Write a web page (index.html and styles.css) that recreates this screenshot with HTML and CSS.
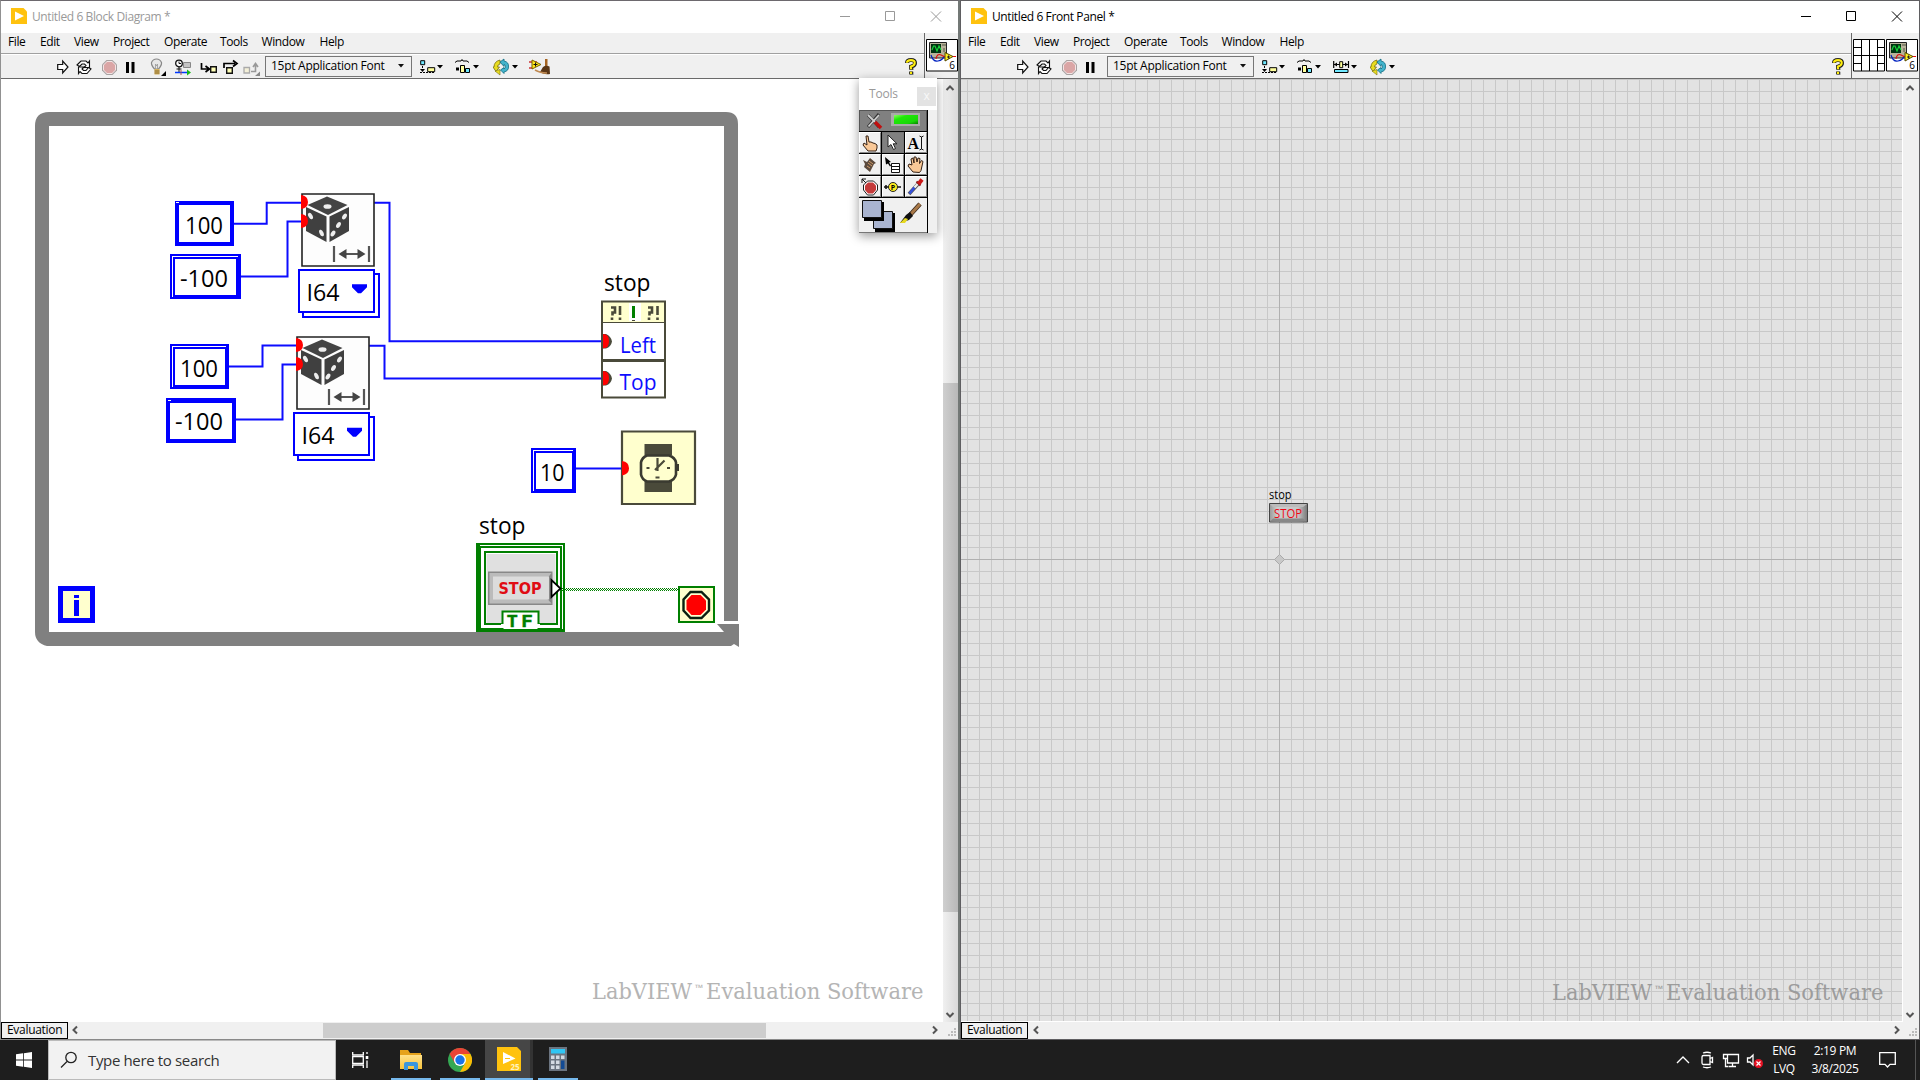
FILE: index.html
```html
<!DOCTYPE html>
<html lang="en">
<head>
<meta charset="utf-8">
<title>LabVIEW - Untitled 6</title>
<link rel="stylesheet" href="styles.css">
</head>
<body>
<svg class="defs" width="0" height="0">
  <defs>
    <linearGradient id="steel" x1="0" x2="1"><stop offset="0" stop-color="#999"/><stop offset=".2" stop-color="#ccc"/><stop offset=".75" stop-color="#c6c6c6"/><stop offset="1" stop-color="#777"/></linearGradient>
    <linearGradient id="led" x1="0" y1="0" x2="1" y2="1"><stop offset="0" stop-color="#8cff60"/><stop offset=".3" stop-color="#20e808"/><stop offset=".75" stop-color="#18d808"/><stop offset="1" stop-color="#088000"/></linearGradient>
    <linearGradient id="folder" x1="0" y1="0" x2="0" y2="1"><stop offset="0" stop-color="#ffe18a"/><stop offset="1" stop-color="#f8c43c"/></linearGradient>
    <pattern id="dots" width="2" height="2" patternUnits="userSpaceOnUse"><path d="M0 0h1v1H0zM1 1h1v1H1z" fill="#007f00"/></pattern>
    <symbol id="logo" viewBox="0 0 16 16"><path d="M0 0h12.500l3.500 3.500V16H0z" fill="#ffc20e"/><path d="M4 3.500l9 4.500-9 4.500z" fill="#fff"/></symbol>
    <symbol id="run" viewBox="0 0 20 20"><path d="M.7 7.500h5V4l5.300 6-5.300 6v-3.500h-5z" fill="#fff" stroke="#111" stroke-width="1.200"/></symbol>
    <symbol id="loop" viewBox="0 0 20 20"><path d="M1 8l4-4h5l2 2 1.500-2v6.500H8L10 8.500 8.500 7H6L3.500 9.500z" fill="#fff" stroke="#111" stroke-width="1.100"/><path d="M15 12l-4 4.500H6l-2-2-1.500 2V10H8l-2 2 1.500 1.500H10l2.500-3z" fill="#fff" stroke="#111" stroke-width="1.100"/></symbol>
    <symbol id="abort" viewBox="0 0 20 20"><path d="M4.500 3h6l4.500 4.500v6L10.500 18h-6L0 13.500v-6z" fill="#a8a2a2"/><path d="M5 4h5l4 4v5l-4 4H5l-4-4V8z" fill="#f3e4e4"/><path d="M5 5h5l3 3v5l-3 3H5l-3-3V8z" fill="#dba6a6"/></symbol>
    <symbol id="pause" viewBox="0 0 20 20"><path d="M0 5h3v11H0zM5.500 5h3v11h-3z" fill="#000"/></symbol>
    <symbol id="bulb" viewBox="0 0 20 20"><path d="M4.500 12Q1 8 1.500 5.500 3 2 6.500 2T11.500 5.500Q12 8 8.500 12z" fill="#e7e7e7" stroke="#888" stroke-width="1.200"/><path d="M5.500 12V7l1 2 1-2v5" fill="none" stroke="#999" stroke-width=".8"/><path d="M4.500 12h5v5.500h-5z" fill="#d6b35c"/><path d="M4.500 14h5M4.500 16h5" stroke="#886b31"/><path d="M16 14v5h-5z" fill="#000"/></symbol>
    <symbol id="retain" viewBox="0 0 20 20"><circle cx="4" cy="6.500" r="3.300" fill="#fff" stroke="#111" stroke-width="1.300"/><path d="M4 4.500v2h2M4 10v5M1.500 12h5" fill="none" stroke="#111"/><path d="M8.500 5.500h7v5h-7z" fill="#c4c4c4" stroke="#888"/><path d="M0 15.500h12" stroke="#0038ff" stroke-width="1.500"/><path d="M12 12.500l4 3-4 3z" fill="#18b818"/><path d="M6 13v5" stroke="#a55"/></symbol>
    <symbol id="into" viewBox="0 0 20 20"><path d="M1.500 6v6H8M5.500 9l4 3-4 3" fill="none" stroke="#000" stroke-width="1.700"/><path d="M10.700 9.700h5.600v5.600h-5.600z" fill="#ffffb8" stroke="#111" stroke-width="1.400"/></symbol>
    <symbol id="over" viewBox="0 0 20 20"><path d="M1 11V6.500h11M10 3.500l4 3-4 3" fill="none" stroke="#000" stroke-width="1.700"/><path d="M3.700 10.700h5.600v5.600H3.700z" fill="#ffffb8" stroke="#111" stroke-width="1.400"/></symbol>
    <symbol id="out" viewBox="0 0 20 20"><path d="M8 14.500h4.500V7M10 10l2.500-3.500L15 10" fill="none" stroke="#999" stroke-width="1.600"/><path d="M1 10.500h5.500V16H1z" fill="#f4f0d8" stroke="#aaa" stroke-width="1.300"/><path d="M17 14.500V19h-5z" fill="#888"/></symbol>
    <symbol id="caret" viewBox="0 0 6 4"><path d="M0 0h6L3 3.500z" fill="#111"/></symbol>
    <symbol id="align" viewBox="0 0 24 20"><path d="M.7 3.700h4v4h-4z" fill="#6fe8ff" stroke="#000"/><path d="M2.500 9v5M0 15.500h14" stroke="#000" stroke-dasharray="2 1"/><path d="M0 12l2.500 3L5 12z"/><path d="M7.700 10.700h7v4h-7z" fill="#ffff9c" stroke="#000"/><path d="M17 8h6l-3 3.500z"/></symbol>
    <symbol id="dist" viewBox="0 0 24 20"><path d="M0 5.500l2-1.500h4l1-1.500L8 4h4l2 1.500" fill="none" stroke="#000"/><path d="M1 10.500h3v3H1z"/><path d="M5.500 8.500h4v7h-4z" fill="#ffff9c" stroke="#000"/><path d="M10.500 11.500h4v4h-4z" fill="#6fe8ff" stroke="#000"/><path d="M18 8h6l-3 3.500z"/></symbol>
    <symbol id="resize" viewBox="0 0 24 20"><path d="M.7 4v7M15.500 4v7M1 7.500h14" stroke="#000" stroke-width="1.200"/><path d="M1 7.500l3-2v4zM15 7.500l-3-2v4z"/><path d="M6.700 4.700h3v6h-3z" fill="#ffff9c" stroke="#000"/><path d="M1.500 12.500H15v3H1.500z" fill="#6fe8ff" stroke="#000"/><path d="M18 8h6l-3 3.500z"/></symbol>
    <symbol id="reorder" viewBox="0 0 25 20"><path d="M7 3Q1 4.500 1 10H0l3 4.500L6.500 10H4.500q0-2.500 2.500-3z" fill="#e8dc20" stroke="#776e10" stroke-width=".8"/><path d="M2 14l5 4v-5.500z" fill="#e8dc20" stroke="#776e10" stroke-width=".6"/><path d="M7 5l4-3v2q5 1 4.500 6 0 4-4.500 5v1.500L7.500 13l3.500-2.500v1.500q1.500-1 1.500-2.500T11 7.500v2z" fill="#43b4cc" stroke="#0d6b82" stroke-width=".8"/><path d="M19 8h6l-3 3.500z"/></symbol>
    <symbol id="clean" viewBox="0 0 24 20"><path d="M0 5h8M0 11h4" stroke="#c33" stroke-width="1.300"/><path d="M3 3l9 4.500-9 4.500z" fill="#ffe81c" stroke="#776300"/><path d="M4.500 7.500h4M6.500 5.500v4" stroke="#111"/><path d="M16 2h2.500v9H16z" fill="#a66421"/><path d="M14 10q3-2 6.500-.5L21 17q-6 1-10-2z" fill="#5b3716"/><path d="M6 13q5 3 12 3" fill="none" stroke="#c08a52" stroke-width="1.600"/></symbol>
    <symbol id="help" viewBox="0 0 12 18"><path d="M2 5q0-3 4-3t4 3.200Q10 7.500 6.500 9v3M6.500 13.800v3" fill="none" stroke="#777" stroke-width="4"/><path d="M2 5q0-3 4-3t4 3Q10 7.500 6 8.500v3M6 13.500v2.800" fill="none" stroke="#111" stroke-width="3.600"/><path d="M2 4.800q0-2.600 4-2.600T9.700 5Q9.700 7.500 6 8.500v2.700M6 13.800v2.200" fill="none" stroke="#ffee10" stroke-width="2.200"/></symbol>
    <symbol id="vi" viewBox="0 0 32 33"><path d="M.5.500h31v31.500H.5z" fill="#fff" stroke="#000"/><path d="M3.500 3.500h17V19h-17z" fill="#b8b39a" stroke="#222"/><path d="M5 5h10v9H5z" fill="#031"/><path d="M6 11l1.500-4H9l2 5 2-5 2 4" fill="none" stroke="#19d53c" stroke-width="1.200"/><path d="M17 5v2M19 5v2M18 9v4" stroke="#554"/><path d="M5 16q2 7 7 6t6-5" fill="none" stroke="#0022c0" stroke-width="1.200"/><path d="M10 20q1-6 5-4t4 2M24 17.500h6" fill="none" stroke="#e01010" stroke-width="1.200"/><path d="M19 13.500l8 4-8 4.500z" fill="#ffef20" stroke="#554800"/><path d="M21 18h3M22.500 16.500v3" stroke="#222"/><text x="23.300" y="29.500" class="vinum">6</text></symbol>
    <symbol id="dice" viewBox="0 0 74 74"><path d="M1 1h72v72H1z" fill="#fdfdfd" stroke="#222" stroke-width="1.600"/><path d="M26 3.500L46.500 12 27 22 6.500 12z" fill="#444"/><path d="M5 14l20.500 9.500V49L5 38z" fill="#404040"/><path d="M48 14L28.500 23.500V49L48 38z" fill="#404040"/><g fill="#eee"><ellipse cx="26.500" cy="13.500" rx="4" ry="2.300"/><ellipse cx="9.500" cy="23" rx="2" ry="3.500" transform="rotate(-30 9.500 23)"/><ellipse cx="20.500" cy="40" rx="2" ry="3.500" transform="rotate(-25 20.500 40)"/><ellipse cx="43.500" cy="23.500" rx="2" ry="3.300" transform="rotate(30 43.500 23.500)"/><ellipse cx="37.500" cy="32" rx="2" ry="3.300" transform="rotate(30 37.500 32)"/><ellipse cx="32" cy="40.500" rx="2" ry="3.300" transform="rotate(30 32 40.500)"/></g><path d="M33 53v16M68 53v16M41 61h20" stroke="#555" stroke-width="2.200"/><path d="M37.500 61l8-5v10zM64.500 61l-8-5v10z" fill="#444"/></symbol>
  </defs>
</svg>

<div class="screen">
  <div class="desk">
    <!-- Block diagram window -->
    <section class="window diagram-window">
      <header class="titlebar inactive">
        <svg class="logo"><use href="#logo"/></svg><span class="title">Untitled 6 Block Diagram *</span>
        <svg class="winbtns" viewBox="0 0 120 32"><path d="M12 15.500h10M57.500 10.500h9v9h-9zM103 10.500l10 10M113 10.500l-10 10" fill="none" stroke="currentColor"/></svg>
      </header>
      <div class="header">
        <div class="bars">
          <nav class="menu"><span>File</span><span>Edit</span><span>View</span><span>Project</span><span>Operate</span><span>Tools</span><span>Window</span><span>Help</span></nav>
          <div class="toolbar bd-tools">
            <svg class="i20"><use href="#run"/></svg><svg class="i20"><use href="#loop"/></svg><svg class="i20"><use href="#abort"/></svg><svg class="i20"><use href="#pause"/></svg><svg class="i20"><use href="#bulb"/></svg><svg class="i20"><use href="#retain"/></svg><svg class="i20"><use href="#into"/></svg><svg class="i20"><use href="#over"/></svg><svg class="i20"><use href="#out"/></svg>
            <div class="fontbox"><span>15pt Application Font</span><svg class="caret"><use href="#caret"/></svg></div>
            <svg class="i24"><use href="#align"/></svg><svg class="i24"><use href="#dist"/></svg><svg class="i25"><use href="#reorder"/></svg><svg class="i24"><use href="#clean"/></svg><svg class="help"><use href="#help"/></svg>
          </div>
        </div>
        <div class="vibox"><svg class="vi"><use href="#vi"/></svg></div>
      </div>
      <div class="work">
        <svg class="canvas" viewBox="1 79 942 943">
          <path d="M717 632V646H50L47 646Q35 643 35 632V126Q35 112 49 112H726Q738 112 738 124V621H724V126H49V632Z" fill="#808080"/>
          <path d="M717 624h22v23l-5-3-3 2H717v-14h7z" fill="#808080"/>
          <g fill="none" stroke="#0d0dff" stroke-width="2">
            <path d="M230 223.700h36.700v-21H302M238 276.500h49.500v-55H302M229 366.500h33.500v-21H297M236 419.500h46.500v-55H297"/>
            <path d="M374 202.700h15.500v138.600H602M369 345.700h15.500v32.700H602M576 468.500h46"/>
          </g>
          <g fill="none" stroke="#00f" class="crisp">
            <path d="M177 203h55v41h-55z" stroke-width="4"/>
            <path d="M171 255h69v43h-69zM174 258h63v38h-63z" stroke-width="2"/><path d="M239 256v42M174 297h66" stroke-width="3"/>
            <path d="M171 345h57v43h-57zM174 348h52v38h-52z" stroke-width="2"/><path d="M227 346v42M174 387h54" stroke-width="3"/>
            <path d="M167 399h68v43h-68zM169 401.500h64v38h-64z" stroke-width="2"/><path d="M168 400v42M234 400v42M168 400h67" stroke-width="3"/>
            <path d="M532 449h43v43h-43zM535 452h38v38h-38z" stroke-width="2"/><path d="M574 450v42M535 491h40" stroke-width="3"/>
          </g>
          <path d="M176 202.500h3M168 400.500h3" stroke="#fff"/>
          <svg x="301" y="193" width="74" height="74"><use href="#dice"/></svg>
          <svg x="296" y="336" width="74" height="74"><use href="#dice"/></svg>
          <g fill="red"><path d="M301 195q7 1 7 7t-7 7zM301 214q7 1 7 7t-7 7zM296 338q7 1 7 7t-7 7zM296 357q7 1 7 7t-7 7z"/></g>
          <g class="crisp" fill="#fff" stroke="#00f" stroke-width="2"><path d="M303 274h76v43h-76z"/><path d="M299 269.500h75V312h-75z"/><path d="M298 417h76v43h-76z"/><path d="M294 412.500h75V455h-75z"/></g>
          <path d="M352 284.300h15v3l-6 6h-3l-6-6zM347 427.800h15v3l-6 6h-3l-6-6z" fill="#00f"/>
          <g class="diag">
            <text x="185" y="234" textLength="38" lengthAdjust="spacingAndGlyphs">100</text>
            <text x="180" y="287" textLength="48" lengthAdjust="spacingAndGlyphs">-100</text>
            <text x="180" y="377" textLength="38" lengthAdjust="spacingAndGlyphs">100</text>
            <text x="175" y="430" textLength="48" lengthAdjust="spacingAndGlyphs">-100</text>
            <text x="540" y="481" textLength="24.500" lengthAdjust="spacingAndGlyphs">10</text>
            <text x="306.500" y="301" textLength="33" lengthAdjust="spacingAndGlyphs">I64</text>
            <text x="301.500" y="444" textLength="33" lengthAdjust="spacingAndGlyphs">I64</text>
            <text x="604" y="291" textLength="46.500" lengthAdjust="spacingAndGlyphs">stop</text>
            <text x="479" y="534" textLength="46.500" lengthAdjust="spacingAndGlyphs">stop</text>
          </g>
          <path d="M602 301.500h63V398h-63z" fill="#fff"/><path d="M602 301.500h63V322h-63z" fill="#ffffce"/>
          <path d="M602 301.500h63V397.500h-63z" fill="none" stroke="#4a4a3a" stroke-width="2"/><path d="M602 322.500h63" stroke="#4a4a3a"/><path d="M602 360.500h63" stroke="#4a4a3a" stroke-width="3"/>
          <path d="M629 303h12v18h-12z" fill="#fff"/><path d="M632 306h3v12h-3z" fill="#008000"/><path d="M632 320.500h3" stroke="#4a4a3a"/>
          <g fill="none" stroke="#4a4a3a" stroke-width="2.600"><path d="M611 307.500h4v5h-2.500v3M612 317.500v2.500M620 306v9M620 317.500v2.500M648 307.500h4v5h-2.500v3M649 317.500v2.500M657.500 306v9M657.500 317.500v2.500"/></g>
          <path d="M603 334h3q5 2 6 7.500-1 5.500-6 7h-3zM603 371h3q5 2 6 7.500-1 5.500-6 7h-3z" fill="#4a4a3a"/><path d="M603 334q6 0 6 7.300t-6 7zM603 371q6 0 6 7.300t-6 7z" fill="red"/>
          <g class="prop"><text x="620" y="352.500" textLength="36" lengthAdjust="spacingAndGlyphs">Left</text><text x="619.500" y="389.500" textLength="37" lengthAdjust="spacingAndGlyphs">Top</text></g>
          <path d="M622 431.500h73V504h-73z" fill="#ffffce" stroke="#4a4a3a" stroke-width="2.200"/>
          <path d="M644.500 444h27.500v11h-27.500zM644.500 481h27.500v11h-27.500z" fill="#4a4a3a"/><path d="M647 455.500h22q6 2 7 7v12q-1 5-7 7h-22q-5-2-6-7v-12q1-5 6-7z" fill="#ffffce" stroke="#3a3a30" stroke-width="2.600"/><path d="M676 464h3v7h-3z" fill="#3a3a30"/><path d="M657.500 458v13M655 470l9.500-9.500M646.500 468h3M667 468h3M655.500 477.500h4" stroke="#4a4a3a" stroke-width="2.200"/>
          <path d="M622 461q7 1 7 7.200t-7 7.200z" fill="red"/>
          <g fill="none" stroke="#007f00" class="crisp">
            <path d="M477 544h87v87h-87z" fill="#fff" stroke-width="2"/><path d="M478 545v87" stroke-width="3"/><path d="M480 547h81v82h-81z" stroke-width="2"/><path d="M478 630h86" stroke-width="3"/>
            <path d="M484.500 551.500h72V624h-72z" fill="#fff" stroke-width="2"/>
          </g>
          <path d="M486.500 554h69v69h-69z" fill="#e0e0e0"/>
          <path d="M488 571.500h64.500V605H488z" fill="#888"/><path d="M489.500 573h62l-4 5v21l4 4.500h-62z" fill="#bbb"/><path d="M493 576.500h56v23h-56z" fill="#dcdcdc"/>
          <text class="stopbtn" x="498.500" y="594" textLength="43" lengthAdjust="spacingAndGlyphs">STOP</text>
          <path d="M502.500 611.500h36V630h-36z" fill="#fff" stroke="#007f00" stroke-width="2"/><path d="M501 624h3v4h-3zM537 624h3v4h-3z" fill="#fff"/>
          <g class="tf"><text x="506.500" y="626.500" textLength="11.500" lengthAdjust="spacingAndGlyphs">T</text><text x="521" y="626.500" textLength="12" lengthAdjust="spacingAndGlyphs">F</text></g>
          <path d="M551.500 580v17l9-8.500z" fill="#fff" stroke="#000" stroke-width="1.800"/>
          <path d="M562 588h117v3H562z" fill="url(#dots)"/>
          <path d="M679 587h35v35h-35z" fill="#ffffce" stroke="#007f00" stroke-width="2"/>
          <path d="M690.500 592h11l7.500 7.500v11l-7.500 7.500h-11l-7-7.500v-11z" fill="#ffffce" stroke="#0a2010" stroke-width="2.400"/><path d="M691.500 595h9l5.500 5.500v9l-5.500 5.500h-9l-5-5.500v-9z" fill="red"/>
          <path d="M60.500 588.500h32v32h-32z" fill="#ffffce" stroke="#00f" stroke-width="5"/><path d="M74 595h5v3h-5zM74 600h5v16h-5z" fill="#00f"/>
          <g class="mark"><text x="592" y="999" textLength="100" lengthAdjust="spacingAndGlyphs">LabVIEW</text><text class="tm" x="695" y="991" textLength="8.500" lengthAdjust="spacingAndGlyphs">™</text><text x="706" y="999" textLength="217.500" lengthAdjust="spacingAndGlyphs">Evaluation Software</text></g>
        </svg>
        <div class="vscroll shade"><svg class="arr"><path d="M3.500 11L7 7.500 10.500 11"/></svg><div class="vthumb"></div><svg class="arr"><path d="M3.500 7L7 10.500 10.500 7"/></svg></div>
      </div>
      <footer class="bottom"><div class="eval">Evaluation</div><svg class="arr left"><path d="M9 4.500L5.500 8 9 11.500"/></svg><div class="htrack"><div class="hthumb"></div></div><svg class="arr"><path d="M5 4.500L8.500 8 5 11.500"/></svg><svg class="grip"><path d="M11 2h2v2h-2zM8 5h2v2H8zM11 5h2v2h-2zM5 8h2v2H5zM8 8h2v2H8zM11 8h2v2h-2z"/></svg></footer>
    </section>

    <!-- Front panel window -->
    <section class="window panel-window">
      <header class="titlebar">
        <svg class="logo"><use href="#logo"/></svg><span class="title">Untitled 6 Front Panel *</span>
        <svg class="winbtns" viewBox="0 0 120 32"><path d="M12 15.500h10M57.500 10.500h9v9h-9zM103 10.500l10 10M113 10.500l-10 10" fill="none" stroke="currentColor"/></svg>
      </header>
      <div class="header">
        <div class="bars">
          <nav class="menu"><span>File</span><span>Edit</span><span>View</span><span>Project</span><span>Operate</span><span>Tools</span><span>Window</span><span>Help</span></nav>
          <div class="toolbar fp-tools">
            <svg class="i20"><use href="#run"/></svg><svg class="i20"><use href="#loop"/></svg><svg class="i20"><use href="#abort"/></svg><svg class="i20"><use href="#pause"/></svg>
            <div class="fontbox"><span>15pt Application Font</span><svg class="caret"><use href="#caret"/></svg></div>
            <svg class="i24"><use href="#align"/></svg><svg class="i24"><use href="#dist"/></svg><svg class="i24"><use href="#resize"/></svg><svg class="i25"><use href="#reorder"/></svg><svg class="help"><use href="#help"/></svg>
          </div>
        </div>
        <div class="vibox"><svg class="vi" viewBox="0 0 32 33"><path d="M.5.500h31v31.500H.5zM8.500.500V32M16.500.500V32M24.500.500V32M.5 16.500h31M.5 8.500h8M.5 24.500h8M24.500 8.500h7M24.500 24.500h7" fill="#fff" stroke="#000"/></svg><svg class="vi"><use href="#vi"/></svg></div>
      </div>
      <div class="work">
        <div class="gridpane">
          <svg class="canvas" viewBox="961 79 942 943">
            <path d="M1279.500 79v943M961 559.500h942" stroke="#b0b0b0"/><path d="M1279.500 554.500l5 5-5 5-5-5z" fill="#c8c8c8" stroke="#aaa"/>
            <text class="fplabel" x="1269" y="499" textLength="22.500" lengthAdjust="spacingAndGlyphs">stop</text>
            <path d="M1269.500 503.500h38v18.500h-38z" fill="url(#steel)" stroke="#444"/><path d="M1270 504h37l-4 3h-30z" fill="#bbb"/><path d="M1270 521.500h37l-4-3h-30z" fill="#888"/>
            <text class="fpstop" x="1274" y="518" textLength="28" lengthAdjust="spacingAndGlyphs">STOP</text>
            <g class="mark dark"><text x="1552" y="1000" textLength="100" lengthAdjust="spacingAndGlyphs">LabVIEW</text><text class="tm" x="1655" y="992" textLength="8.500" lengthAdjust="spacingAndGlyphs">™</text><text x="1666" y="1000" textLength="217.500" lengthAdjust="spacingAndGlyphs">Evaluation Software</text></g>
          </svg>
        </div>
        <div class="vscroll"><svg class="arr"><path d="M3.500 11L7 7.500 10.500 11"/></svg><svg class="arr"><path d="M3.500 7L7 10.500 10.500 7"/></svg></div>
      </div>
      <footer class="bottom"><div class="eval">Evaluation</div><svg class="arr left"><path d="M10 4.500L6.500 8 10 11.500"/></svg><div class="htrack"></div><svg class="arr"><path d="M6 4.500L9.500 8 6 11.500"/></svg><svg class="grip"><path d="M11 2h2v2h-2zM8 5h2v2H8zM11 5h2v2h-2zM5 8h2v2H5zM8 8h2v2H8zM11 8h2v2h-2z"/></svg></footer>
    </section>
  </div>

  <!-- Floating tools palette -->
  <aside class="palette">
    <div class="phead"><span>Tools</span><b>x</b></div>
    <div class="pgrid">
      <div class="auto"><svg width="66" height="20" viewBox="0 0 66 20"><path d="M8 4l11 12M19 3L8 16" stroke="#333" stroke-width="3"/><path d="M8 4l7 7M19 4L8.500 15.500" stroke="#d0d0d0" stroke-width="1.800"/><path d="M15 11l6 6" stroke="#c01010" stroke-width="3.500"/><path d="M31 2h29v13H31z" fill="#aaa"/><path d="M34 4h24v9H34z" fill="url(#led)"/></svg></div>
      <div class="cell"><svg viewBox="0 0 20 20"><path d="M8 18l-5-6 1-2 3 2-1-9h2l1 6h2l2 1 2 .500 2 1.500v3l-1 3z" fill="#f9c897" stroke="#332014"/></svg></div>
      <div class="cell on"><svg viewBox="0 0 20 20"><path d="M5 2v12l3-2.500 2.500 5 2-1-2.300-4.700H14z" fill="#fff" stroke="#222"/></svg></div>
      <div class="cell"><svg viewBox="0 0 20 20"><text class="serifA" x="1.500" y="16">A</text><path d="M13.500 3l2 1 2-1M15.500 4v12M13.500 17l2-1 2 1" fill="none" stroke="#111"/></svg></div>
      <div class="cell"><svg viewBox="0 0 20 20"><path d="M3 5l4 2 3-4 6 5-2 1-4 8-6-5 1-3z" fill="#5b4a3c"/><path d="M8 8l4 3M9 6l4 3M7 11l3 2" stroke="#d09a68"/></svg></div>
      <div class="cell"><svg viewBox="0 0 20 20"><path d="M2 2l6 5-2 .500 2 3-1 1-2-3-2 1z"/><path d="M8.500 8.500h8v9h-8zM8.500 11.500h8M8.500 14.500h8" fill="#fff" stroke="#111"/></svg></div>
      <div class="cell"><svg viewBox="0 0 20 20"><path d="M7 17L2 11l1-2 3 1-1-6 2-1 1 5V2h2l1 5 1-4 2 .500-.5 5 2-3 1.500 1-2 9-1.500 2z" fill="#f9c897" stroke="#332014"/></svg></div>
      <div class="cell"><svg viewBox="0 0 20 20"><path d="M7.500 4h6l4 4v5l-4 5h-6l-4-5V8z" fill="#fff" stroke="#222"/><path d="M8 5.500h5L16 8.500V13l-3 3.500H8L5 13V8.500z" fill="#c43a3a"/><path d="M2 2h4M2 2v4M2 2l4 4" stroke="#111"/></svg></div>
      <div class="cell"><svg viewBox="0 0 20 20"><path d="M1 10h17M3 8v4" stroke="#111" stroke-width="1.500"/><circle cx="10" cy="10" r="4.500" fill="#ffee20" stroke="#222"/><text class="pp" x="7.800" y="12.800">P</text></svg></div>
      <div class="cell"><svg viewBox="0 0 20 20"><path d="M3 17l9-10" stroke="#555" stroke-width="3.600"/><path d="M3.500 16.500l5-6" stroke="#3450dd" stroke-width="2.600"/><path d="M8.500 10.500l4-4.500" stroke="#eee" stroke-width="2.400"/><path d="M10.500 4.500l4 4" stroke="#711" stroke-width="2"/><path d="M12.500 7l3.500-4.500" stroke="#cc1818" stroke-width="4"/></svg></div>
      <div class="colors"><svg width="66" height="34" viewBox="0 0 66 34"><path d="M16 15h20v19H16z"/><path d="M14.500 13.500h19v17h-19z" fill="#a9b4d0" stroke="#111"/><path d="M5 4h20v19H5z"/><path d="M3.500 2.500h19v17h-19z" fill="#a9b4d0" stroke="#111"/><path d="M61 6L51 17" stroke="#3a2a1c" stroke-width="4.500"/><path d="M61 6L52 16" stroke="#a87848" stroke-width="3"/><path d="M51 14l-4 3-6 8 9-3 4-4z" fill="#111"/><path d="M41 25h5l3-4-3-1z" fill="#e6d820"/></svg></div>
    </div>
  </aside>

  <!-- Taskbar -->
  <footer class="taskbar">
    <div class="start"><svg width="16" height="16"><path d="M0 2.300l7-1V7.600H0zM7.800 1.200L16 0v7.600H7.800zM0 8.400h7v6.300l-7-1zM7.800 8.400H16V16l-8.200-1.200z" fill="#fff"/></svg></div>
    <div class="search"><svg width="18" height="18" viewBox="0 0 18 18"><circle cx="11" cy="6.500" r="5.200"/><path d="M7 10.500L1 16.500"/></svg><span>Type here to search</span></div>
    <div class="tv"><svg width="17" height="18" viewBox="0 0 17 18"><path d="M.7 1v3h10.600V1M.7 17v-3h10.600v3M.7 5.700h10.600v6.600H.7zM15 1v2M15 9.500V17" fill="none" stroke="#fff" stroke-width="1.300"/><path d="M13.700 5h2.600v3h-2.600z" fill="#fff"/></svg></div>
    <div class="app explorer"><svg width="24" height="20" viewBox="0 0 24 20"><path d="M1 0h8l2 3h11v16H1z" fill="#e5a21c"/><path d="M1 5h22v14H1z" fill="url(#folder)"/><path d="M5 20v-6q0-2 2-2h10q2 0 2 2v6h-4v-4H9v4z" fill="#3a96dd"/></svg></div>
    <div class="app chrome"><svg width="24" height="24" viewBox="-12 -12 24 24"><circle r="12" fill="#34a853"/><path d="M-10.400-6A12 12 0 0110.400-6H0L-5.200 3z" fill="#ea4335"/><path d="M10.400-6A12 12 0 010 12L5.200 3 0-6z" fill="#fbbc05"/><circle r="6" fill="#fff"/><circle r="4.700" fill="#1a73e8"/></svg></div>
    <div class="app lv"><svg width="24" height="24" viewBox="0 0 24 24"><path d="M0 0h20l4 4v20H0z" fill="#ffc20e"/><path d="M6 5l12.500 6.500L6 17z" fill="#fff"/><path d="M8 11.500h5" stroke="#ffc20e"/><text class="yr" x="13.500" y="22.500">25</text></svg></div>
    <div class="app calc"><svg width="18" height="24" viewBox="0 0 18 24"><path d="M0 0h18v24H0z" fill="#6b7480"/><path d="M2 2h14v4.500H2z" fill="#30c6f4"/><path d="M2 8.500h3.500v3.500H2zM7 8.500h3.500v3.500H7zM12 8.500h3.500v3.500H12zM2 13.500h3.500V17H2zM7 13.500h3.500V17H7zM2 18.500h3.500V22H2zM7 18.500h3.500V22H7z" fill="#d4dae2"/><path d="M12 13.500h3.500V22H12z" fill="#124a94"/></svg></div>
    <div class="tray">
      <svg width="90" height="24" viewBox="1675 1048 90 24"><g fill="none" stroke="#fff" stroke-width="1.300"><path d="M1677 1063l6-6 6 6M1703.500 1055.500h6.500v9h-6.500q-1.500 0-1.500-1.500v-6q0-1.500 1.500-1.500M1710 1058.500l2.500-1v5l-2.500-1M1703 1053q4-1.500 8 0M1703 1067q4 1.500 8 0"/><path d="M1728 1054.500h10.500v8.500h-11v-4M1732.500 1063v3M1729 1066.500h7M1723.500 1054.500h4v4h-4zM1725.500 1059v7.500h3"/><path d="M1747.500 1058h2.500l3-3v10l-3-3h-2.500z"/></g><circle cx="1758.500" cy="1063.500" r="4.500" fill="#e81123"/><path d="M1756.500 1061.500l4 4M1760.500 1061.500l-4 4" stroke="#fff" stroke-width="1.200"/></svg>
      <div class="lang"><span>ENG</span><span>LVQ</span></div>
      <div class="clock"><span>2:19 PM</span><span>3/8/2025</span></div>
      <svg class="note" width="17" height="17" viewBox="0 0 17 17"><path d="M.7.700h15.600v11.600H11L8.500 15 6 12.300H.7z" fill="none" stroke="#fff" stroke-width="1.300"/></svg>
      <i class="peek"></i>
    </div>
  </footer>
</div>
</body>
</html>
```
FILE: styles.css
```css
* { box-sizing: border-box; }
body { margin: 0; font-family: "Open Sans", "Noto Sans", sans-serif; font-size: 12px; color: #000; }
svg { display: block; flex: none; }
.defs { position: absolute; }
.screen { width: 1920px; height: 1080px; overflow: hidden; display: grid; grid-template-rows: 1040px 40px; position: relative; background: #1e1e1e; }
.desk { display: grid; grid-template-columns: 960px 960px; }
.window { display: grid; grid-template-rows: 32px 46px 943px 17px; border: 1px solid #6d696e; background: #f0f0f0; min-width: 0; }
.diagram-window { border-left-color: #919191; border-right: 2px solid #737876; border-bottom-color: #888; }
.panel-window { border-color: #5f5e61; }

.titlebar { display: flex; align-items: center; background: #fff; padding-left: 10px; }
.titlebar .logo { width: 16px; height: 16px; margin-top: -2px; }
.title { margin: -2px 0 0 5px; font-size: 12px; letter-spacing: -.39px; }
.winbtns { width: 120px; height: 32px; margin-left: auto; margin-right: 10px; }
.inactive { color: #999; }

.header { display: grid; grid-template-columns: 1fr auto; border-bottom: 1px solid #6a6a6a; }
.bars { display: grid; grid-template-rows: 21px 24px; }
.menu { display: grid; grid-template-columns: 32px 34px 39px 51px 56px 41.500px 58px 60px; padding-left: 7px; line-height: 18px; letter-spacing: -.4px; border-bottom: 1px solid #a0a0a0; }
.toolbar { display: grid; align-items: center; border-top: 1px solid #fff; }
.bd-tools { grid-template-columns: 19px 26px 24px 24px 25px 25px 23px 20px 22px 155px 35px 38px 36px 1fr 19px; padding-left: 56px; }
.fp-tools { grid-template-columns: 19px 26px 24px 21px 155px 35px 36px 37px 1fr 19px; padding-left: 56px; }
.i20 { width: 20px; height: 20px; }
.i24 { width: 24px; height: 20px; }
.i25 { width: 25px; height: 20px; }
.help { width: 12px; height: 18px; }
.fontbox { width: 147px; height: 21px; border: 1px solid #767676; display: flex; align-items: center; justify-content: space-between; padding: 0 7px 2px 5px; letter-spacing: -.27px; white-space: nowrap; }
.caret { width: 6px; height: 4px; }
.vibox { display: flex; border-left: 1px solid #6a6a6a; padding: 6px 0 0 1px; }
.panel-window .vibox { padding-right: 1px; }
.panel-window .vibox .vi + .vi { margin-left: 1px; }
.vi { width: 32px; height: 33px; }
.vinum { font: 10px "Open Sans", sans-serif; }

.work { display: grid; grid-template-columns: 942px 1fr; background: #fff; }
.canvas { width: 942px; height: 943px; }
.crisp { shape-rendering: crispEdges; }
.diag { font-size: 24px; font-family: "Open Sans", sans-serif; }
.prop { font-size: 21px; fill: #0d0dff; font-family: "Open Sans", sans-serif; }
.stopbtn { font: bold 16px "DejaVu Sans", sans-serif; fill: #e00c14; }
.tf { font: bold 16px "DejaVu Sans Mono", monospace; fill: #007f00; stroke: #007f00; stroke-width: .3px; }
.mark { font-family: "DejaVu Serif", serif; font-size: 22.500px; fill: #b4b4b4; }
.mark .tm { font: bold 9px "Open Sans", sans-serif; }
.dark { fill: #9c9c9c; }
.fplabel { font-size: 12px; }
.fpstop { font-size: 13px; fill: #f00614; }
.gridpane { width: 941px; height: 942px; overflow: hidden; background-color: #e2e2e2; background-image: linear-gradient(90deg, #c8c8c8 1px, transparent 1px), linear-gradient(#c8c8c8 1px, transparent 1px); background-size: 12px 12px; background-position: 6px 0, 0 0; }
.vscroll { display: flex; flex-direction: column; justify-content: space-between; background: #f0f0f0; }
.shade { background: linear-gradient(90deg, #f0f0f0, #d9d9d9); }
.vthumb { height: 529px; flex: none; margin-top: 288px; margin-bottom: 94px; background: linear-gradient(90deg, #cfcfcf, #b8b8b8); }
.arr { width: 15px; height: 16px; fill: none; stroke: #555; stroke-width: 2; }

.bottom { display: flex; background: #f0f0f0; }
.eval { width: 67px; height: 17px; border: 1px solid #000; padding-left: 5px; line-height: 14px; letter-spacing: -.3px; }
.htrack { flex: 1; padding: 1px 0 1px 240px; }
.hthumb { width: 443px; height: 15px; background: #cdcdcd; }
.grip { width: 15px; height: 16px; margin-top: 4px; fill: #bbb; }

.palette { position: absolute; left: 859px; top: 78px; width: 78px; height: 155px; background: #f0f0f0; box-shadow: 0 3px 10px rgba(0,0,0,.4); }
.phead { height: 32px; background: #fff; display: flex; justify-content: space-between; color: #999; line-height: 31px; padding-left: 10px; letter-spacing: -.2px; }
.phead b { width: 19px; height: 19px; margin: 9px 1px 0 0; background: #e3e3e3; color: #f8f8f8; text-align: center; line-height: 18px; font-weight: 400; }
.pgrid { width: 69px; display: grid; grid-template-columns: 22px 22px 22px; grid-template-rows: 21px 21px 21px 21px 35px; gap: 1px; background: #000; border-right: 1px solid #000; }
.auto, .colors { grid-column: 1 / 4; background: #808080; }
.auto { border: 1px solid #555; border-bottom: 0; }
.colors { background: #f0f0f0; border-bottom: 1px solid #777; }
.cell { background: #f0f0f0; border: 1px solid #fff; border-right-color: #888; border-bottom-color: #888; }
.cell svg { width: 20px; height: 20px; }
.on { background: #808080; border-color: #777; }
.serifA { font: bold 16px "Liberation Serif", serif; }
.pp { font: bold 7px "Open Sans", sans-serif; }

.taskbar { display: flex; background: #1e1e1e; color: #fff; }
.start { width: 48px; display: flex; align-items: center; justify-content: center; }
.search { width: 288px; display: flex; align-items: center; background: #f2f2f2; border: 1px solid #bbb; padding-left: 11px; color: #333; font-size: 15px; letter-spacing: -.35px; }
.search svg { fill: none; stroke: #222; stroke-width: 1.300; margin-right: 10px; }
.tv { width: 55px; display: flex; align-items: center; padding-left: 16px; }
.app { display: flex; align-items: center; justify-content: center; border-bottom: 2px solid #76b9ed; padding-top: 2px; }
.explorer { width: 40px; }
.chrome { width: 40px; margin-left: 9px; padding-top: 1px; }
.lv { width: 48px; margin-left: 5px; background: linear-gradient(90deg, #464646 45px, #333 45px); padding-top: 0; }
.calc { width: 40px; margin-left: 5px; padding-top: 0; }
.yr { font: bold 8px "Open Sans", sans-serif; fill: #fff4c0; }
.tray { margin-left: auto; display: flex; align-items: center; font-size: 12px; letter-spacing: -.35px; }
.lang, .clock { display: flex; flex-direction: column; align-items: center; line-height: 18px; }
.lang { width: 38px; }
.clock { width: 64px; }
.note { margin-left: 12px; }
.peek { width: 1px; height: 40px; background: #555; margin-left: 19px; margin-right: 4px; }
```
